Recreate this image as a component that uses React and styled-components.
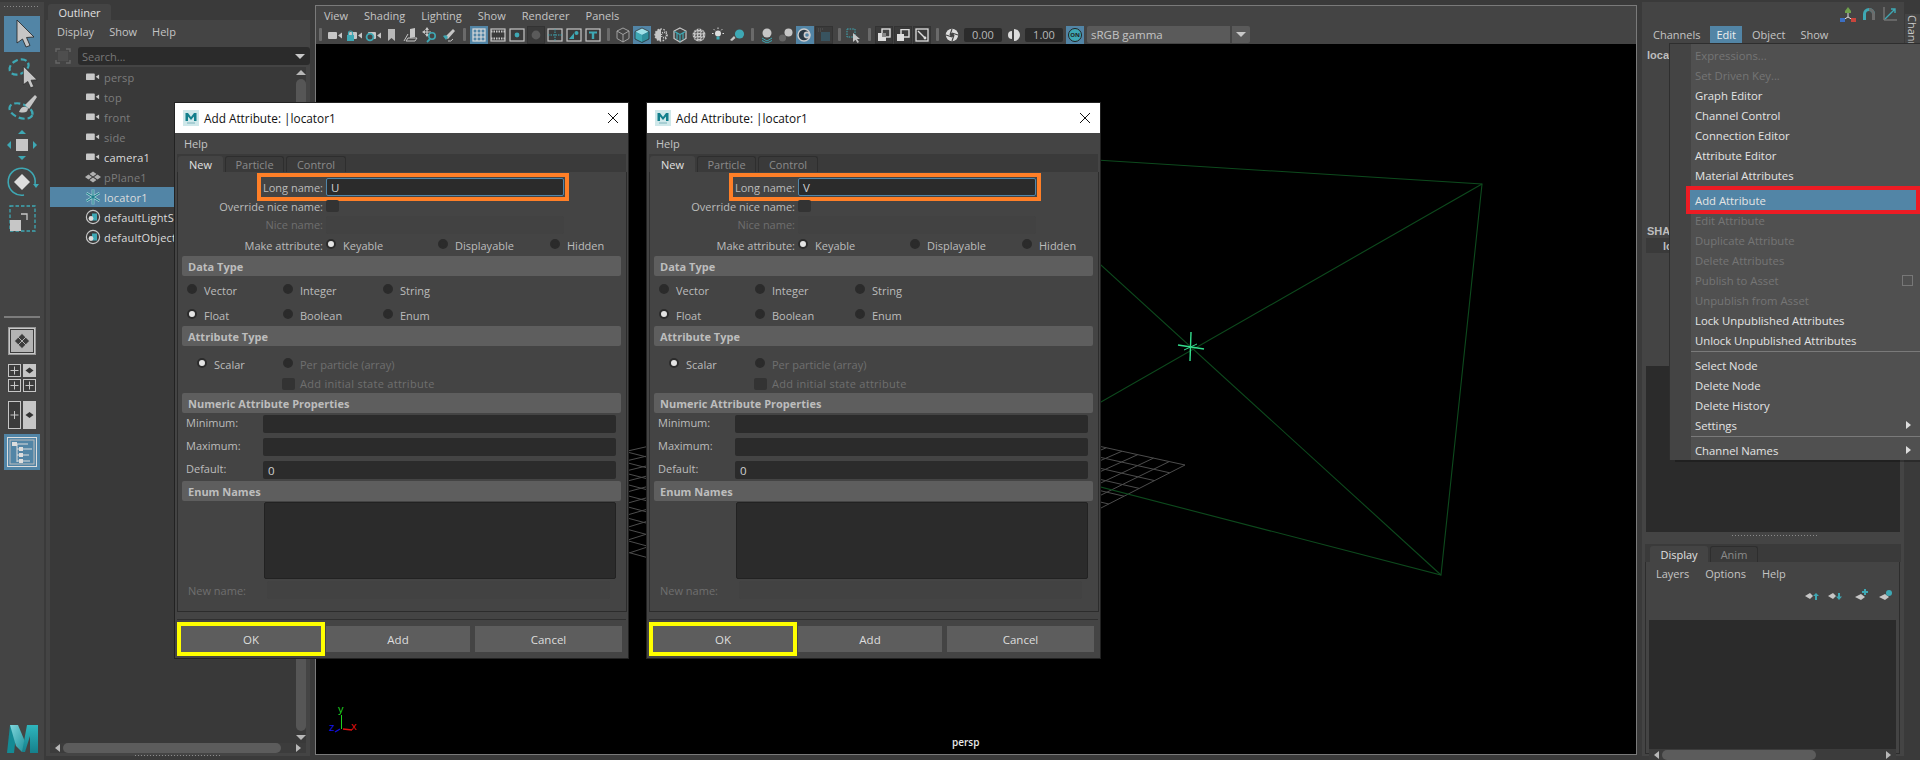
import React from 'react'
import styled, { createGlobalStyle } from 'styled-components'

const GREY = '#c6c6c6'
const TEAL = '#3ea8b4'
const BLUE = '#5285a6'

const GlobalStyle = createGlobalStyle`
	html, body {
		margin: 0;
		width: 1920px;
		height: 760px;
		overflow: hidden;
		background: #3a3a3a;
	}
	* { box-sizing: border-box; }
	body {
		font-family: 'Open Sans', 'Liberation Sans', sans-serif;
		font-size: 11px;
		color: #c8c8c8;
	}
`

const Ico = ({ size = 16, children }) => (
	<svg width={size} height={size} viewBox="0 0 16 16" style={{ display: 'block' }}>
		{children}
	</svg>
)

const Frame = ({ children }) => (
	<>
		<rect x="1" y="2" width="14" height="12" fill="#3a3a3a" stroke={GREY} strokeWidth="1.2" />
		{children}
	</>
)

/* ---- viewport toolbar glyphs ---- */
const Cam = ({ x = 1, w = 9 }) => (
	<>
		<rect x={x} y="5" width={w} height="7" rx="1" fill={GREY} />
		<polygon points={`${x + w + 1},8.5 ${x + w + 5},5.5 ${x + w + 5},11.5`} fill={GREY} />
	</>
)

const glyphs = {
	camera: <Cam />,
	camLock: (
		<>
			<Cam x={3} w={8} />
			<rect x="1" y="8" width="7" height="6" fill={TEAL} />
			<path d="M2.5 8V6a2 2 0 0 1 4 0v2" fill="none" stroke={TEAL} strokeWidth="1.2" />
		</>
	),
	camGear: (
		<>
			<Cam x={3} w={8} />
			<circle cx="5" cy="10" r="3.4" fill="#444" stroke={TEAL} strokeWidth="1.8" />
		</>
	),
	bookmark: <path d="M4 2H11V14L7.5 11L4 14Z" fill="#b8b8b8" />,
	pan: (
		<>
			<path d="M7 2L12 1L12 10L7 11Z" fill={GREY} />
			<path d="M5 11L3 14H12L14 11Z" fill="none" stroke={GREY} />
			<path d="M5 7L1 14" stroke={GREY} />
		</>
	),
	moveZoom: (
		<>
			<path d="M5 1V9M1 5H9" stroke={GREY} strokeWidth="1.2" />
			<path d="M5 0L3 3H7ZM0 5L3 3V7ZM5 10L3 7H7Z" fill={GREY} />
			<circle cx="10" cy="9" r="3.2" fill="none" stroke={TEAL} strokeWidth="1.6" />
			<path d="M8 12L5 15" stroke={TEAL} strokeWidth="1.8" />
		</>
	),
	pencil: (
		<>
			<path d="M4 10L12 2L14 4L7 12Z" fill={GREY} />
			<path d="M2 9Q5 7 7 10L5 13Z" fill={TEAL} />
			<path d="M7 14Q10 15 12 12" fill="none" stroke={GREY} />
		</>
	),
	grid: (
		<>
			<rect x="2" y="2" width="12" height="12" fill="none" stroke="#ddd" strokeWidth="1.2" />
			<path d="M6 2V14M10 2V14M2 6H14M2 10H14" stroke="#ddd" strokeWidth="1.1" />
		</>
	),
	film: (
		<Frame>
			<path d="M1 4.5H15M1 11.5H15" stroke={GREY} strokeDasharray="1.5 1" strokeWidth="2" />
		</Frame>
	),
	res: (
		<Frame>
			<circle cx="8" cy="8" r="2.4" fill={TEAL} />
		</Frame>
	),
	dark: <circle cx="8" cy="8" r="4.4" fill="#5a5a5a" />,
	field: (
		<Frame>
			<path d="M1 8H15M8 2V14" stroke={TEAL} strokeDasharray="1.5 1" />
		</Frame>
	),
	safe: (
		<Frame>
			<polygon points="3,12 8,6 8,12" fill={TEAL} />
			<circle cx="10.5" cy="6" r="2" fill={TEAL} />
		</Frame>
	),
	tee: (
		<Frame>
			<path d="M4 4.5H12V6.5H9.2V12H6.8V6.5H4Z" fill={TEAL} />
		</Frame>
	),
	wire: (
		<g fill="none" stroke="#aaa" strokeWidth="0.9">
			<path d="M8 1L14 4V11.5L8 15L2 11.5V4Z" />
			<path d="M2 4L8 7.5L14 4M8 7.5V15" />
		</g>
	),
	shaded: (
		<>
			<path d="M8 1L15 4.5L8 8L1 4.5Z" fill="#9ee0e8" />
			<path d="M1 4.5L8 8V15.5L1 12Z" fill={TEAL} />
			<path d="M15 4.5L8 8V15.5L15 12Z" fill="#2f8e9c" />
			<path d="M8 1L15 4.5V12L8 15.5L1 12V4.5Z" fill="none" stroke="#222" strokeWidth="0.7" />
		</>
	),
	half: (
		<>
			<path d="M8 2A6 6 0 0 0 8 14Z" fill={GREY} />
			<circle cx="8" cy="8" r="6" fill="none" stroke={GREY} strokeDasharray="1.5 1.5" strokeWidth="1.4" />
			<circle cx="11" cy="8" r="2.6" fill="none" stroke={GREY} strokeDasharray="1 1" strokeWidth="1.6" />
		</>
	),
	texture: (
		<g fill="none" stroke={TEAL} strokeWidth="1.2">
			<path d="M8 1L14 4V11.5L8 15L2 11.5V4Z" stroke={GREY} />
			<path d="M2.5 4.5L8 7.5L13.5 4.5M8 7.5V14.5M5 6V12.5M11 6V12.5" />
		</g>
	),
	checker: (
		<>
			<circle cx="8" cy="8" r="6.4" fill={GREY} />
			<path d="M2 5H14M1.5 8H14.5M2 11H14M5 2V14M8 1.5V14.5M11 2V14" stroke="#444" strokeWidth="1.2" strokeDasharray="1.5 1.5" />
		</>
	),
	light: (
		<>
			<circle cx="8" cy="6.5" r="3" fill="#ddd" />
			<rect x="6.5" y="9.5" width="3" height="3" fill={TEAL} />
			<path d="M8 0.5V2M2 6.5H3.5M12.5 6.5H14M3.7 2.2L4.8 3.3M12.3 2.2L11.2 3.3" stroke="#ddd" />
		</>
	),
	shadow: (
		<>
			<circle cx="10.5" cy="7" r="4.6" fill={TEAL} />
			<path d="M1 13L5 9L6.5 11L3 14Z" fill={GREY} />
		</>
	),
	ballFlat: (
		<>
			<circle cx="8" cy="6" r="4.5" fill={GREY} />
			<path d="M3 11L8 14L13 11M3 13.5L8 16L13 13.5" fill="none" stroke={TEAL} />
		</>
	),
	ballGrey: (
		<>
			<circle cx="4.5" cy="11" r="3.5" fill="#666" />
			<circle cx="10.5" cy="5.5" r="4" fill={GREY} />
		</>
	),
	xray: (
		<>
			<circle cx="7" cy="8" r="6" fill="#2b3a44" stroke="#ccc" strokeWidth="1.4" />
			<circle cx="10" cy="8" r="3.4" fill="#ccc" />
			<circle cx="10" cy="8" r="1.8" fill={BLUE} />
		</>
	),
	dimBox: (
		<>
			<rect x="5" y="5" width="9" height="9" fill="#38535f" />
			<path d="M2 2H7M2 4H5" stroke="#5a5a5a" strokeDasharray="1 1" />
		</>
	),
	selectBox: (
		<>
			<rect x="1" y="2" width="8" height="8" fill="none" stroke={TEAL} strokeDasharray="1.6 1" />
			<path d="M7 6V15L9.5 12.8L11.5 16L13 15L11 12H14Z" fill={GREY} />
		</>
	),
	overlapA: (
		<>
			<rect x="2" y="6" width="8" height="8" fill="#ddd" />
			<rect x="6" y="2" width="8" height="8" fill="#444" stroke="#ddd" strokeWidth="1.4" />
			<rect x="6" y="6" width="4" height="4" fill="#888" />
		</>
	),
	overlapB: (
		<>
			<rect x="2" y="7" width="7" height="7" fill="#ddd" />
			<path d="M6 7V2.6H14V10H9" fill="none" stroke="#ddd" strokeWidth="1.4" />
		</>
	),
	wand: (
		<>
			<rect x="2" y="2" width="12" height="12" fill="none" stroke="#ddd" strokeWidth="1.3" />
			<path d="M4 4L11 11" stroke="#ddd" strokeWidth="1.4" />
			<circle cx="11" cy="11" r="1.4" fill="#ddd" />
		</>
	),
	aperture: (
		<>
			<circle cx="8" cy="8" r="6.2" fill="#ddd" />
			<path d="M8 2L6 8M14 8L8 6M8 14L10 8M2 8L8 10" stroke="#444" strokeWidth="1.2" />
			<circle cx="8" cy="8" r="2" fill="#444" />
		</>
	),
	contrast: (
		<>
			<path d="M9 2A6 6 0 0 1 9 14Z" fill="#ddd" />
			<path d="M7 4A4 4 0 0 0 7 12Z" fill="#ddd" />
		</>
	),
}

const Glyph = ({ name }) => <Ico>{glyphs[name]}</Ico>

/* ---- left tool box ---- */
const ToolSvg = ({ children }) => (
	<svg width="36" height="36" viewBox="0 0 36 36" style={{ display: 'block' }}>
		{children}
	</svg>
)

const Arrow = ({ transform }) => (
	<path
		transform={transform}
		d="M13 4V27L18.5 23L22 31L26 29.5L22.5 21.5L30 21Z"
		fill={GREY}
		stroke="#222"
		strokeWidth="0.8"
	/>
)

const SelectTool = () => (
	<ToolSvg>
		<Arrow />
	</ToolSvg>
)
const LassoTool = () => (
	<ToolSvg>
		<ellipse cx="15" cy="14" rx="10" ry="7" transform="rotate(-25 15 14)" fill="none" stroke={TEAL} strokeWidth="2.2" strokeDasharray="6 3" />
		<Arrow transform="translate(9 10) scale(.8)" />
	</ToolSvg>
)
const PaintTool = () => (
	<ToolSvg>
		<ellipse cx="17" cy="21" rx="12" ry="7" transform="rotate(20 17 21)" fill="none" stroke={TEAL} strokeWidth="2.2" strokeDasharray="6 3" />
		<path d="M21 15L31 5L33 7L25 19Z" fill={GREY} />
		<path d="M15 22Q18 14 24 18Q24 24 15 22Z" fill={GREY} />
	</ToolSvg>
)
const MoveTool = () => (
	<ToolSvg>
		<rect x="12" y="12" width="12" height="12" fill={GREY} />
		<path d="M18 3L14 7H22ZM18 33L14 29H22ZM3 18L7 14V22ZM33 18L29 14V22Z" fill={TEAL} />
	</ToolSvg>
)
const RotateTool = () => (
	<ToolSvg>
		<path d="M31 20A13.5 13.5 0 1 0 20 31" fill="none" stroke={TEAL} strokeWidth="1.6" />
		<path d="M18 10L26 18L18 26L10 18Z" fill="#ddd" />
		<path d="M29 20H35L32 24Z" fill={TEAL} />
	</ToolSvg>
)
const ScaleTool = () => (
	<ToolSvg>
		<rect x="6" y="5" width="25" height="25" fill="none" stroke={TEAL} strokeWidth="1.3" strokeDasharray="3.5 2" />
		<rect x="6" y="19" width="11" height="11" fill={GREY} />
		<path d="M17 13H23V19" fill="none" stroke={GREY} strokeWidth="1.3" />
	</ToolSvg>
)

const Quad = ({ cx, cy, s = 1 }) => (
	<path
		transform={`translate(${cx} ${cy}) scale(${s})`}
		d="M0 -5L2.5 -2.5L0 0L-2.5 -2.5ZM-5 0L-2.5 -2.5L0 0L-2.5 2.5ZM5 0L2.5 -2.5L0 0L2.5 2.5ZM0 5L2.5 2.5L0 0L-2.5 2.5Z"
		fill="#3c3c3c"
		stroke="#c8c8c8"
		strokeWidth="0.4"
	/>
)

const Plus = ({ x, y, w, h }) => (
	<g>
		<rect x={x + 0.5} y={y + 0.5} width={w - 1} height={h - 1} fill="#3c3c3c" stroke={GREY} />
		<path d={`M${x + w / 2 - 4} ${y + h / 2}h8M${x + w / 2} ${y + h / 2 - 4}v8`} stroke={GREY} />
	</g>
)

const Filled = ({ x, y, w, h }) => (
	<g>
		<rect x={x} y={y} width={w} height={h} fill={GREY} />
		<path d={`M${x + w / 2 - 4} ${y + h / 2}l4 -3l4 3l-4 3z`} fill="#333" />
	</g>
)

const LayoutSvg = ({ children, size = 28 }) => (
	<svg width={size} height={size} viewBox={`0 0 ${size} ${size}`} style={{ display: 'block' }}>
		{children}
	</svg>
)

const MayaLogo = () => (
	<svg width="32" height="29" viewBox="0 0 32 29" style={{ display: 'block' }}>
		<defs>
			<linearGradient id="lg1" x1="0" y1="0" x2="1" y2="1">
				<stop offset="0" stopColor="#7fd6dc" />
				<stop offset="1" stopColor="#1c8f99" />
			</linearGradient>
			<linearGradient id="lg2" x1="0" y1="0" x2="0" y2="1">
				<stop offset="0" stopColor="#2fb6bd" />
				<stop offset="1" stopColor="#157f8b" />
			</linearGradient>
		</defs>
		<polygon points="1,29 4,1 11,1 8,29" fill="#148a94" />
		<polygon points="4,1 12,1 20,20 16,28 10,22" fill="url(#lg1)" />
		<polygon points="16,28 21,1 32,1 32,29 24,29 24,12 19,28" fill="url(#lg2)" />
	</svg>
)

const MiniLogo = () => (
	<LogoTile>
		<svg width="16" height="16" viewBox="0 0 16 16" style={{ display: 'block' }}>
			<path d="M2.5 11V3H5L8 7L11 3H13.5V11H11V6.5L8 10L5 6.5V11Z" fill="#137f8c" />
			<rect x="4" y="12.5" width="8" height="1" fill="#7eb4bb" />
		</svg>
	</LogoTile>
)

const CloseIcon = () => (
	<svg width="12" height="12" viewBox="0 0 12 12" style={{ display: 'block' }}>
		<path d="M1 1L11 11M11 1L1 11" stroke="#111" strokeWidth="1" />
	</svg>
)

/* ---- outliner row glyphs ---- */
const rowIcons = {
	camera: (
		<Ico size={14}>
			<rect x="0" y="4" width="10" height="7.5" rx="1" fill="#c8c8c8" />
			<polygon points="11,7.8 15,5 15,10.6" fill="#c8c8c8" />
		</Ico>
	),
	plane: (
		<Ico size={16}>
			<path d="M8 2.5L11.5 5L8 7.5L4.5 5ZM8 8.5L11.5 11L8 13.5L4.5 11ZM3.5 5.5L7 8L3.5 10.5L0 8ZM12.5 5.5L16 8L12.5 10.5L9 8Z" fill="#b0b0b0" />
		</Ico>
	),
	locator: (
		<Ico size={16}>
			<path d="M8 0.5V15.5M1.5 4L14.5 12M14.5 4L1.5 12" stroke="#b8dfe2" strokeWidth="2.6" />
			<path d="M8 0.5V15.5M1.5 4L14.5 12M14.5 4L1.5 12" stroke="#1d7d8a" strokeWidth="1.2" />
		</Ico>
	),
	set: (
		<Ico size={16}>
			<circle cx="8" cy="8" r="6.6" fill="none" stroke="#c8c8c8" strokeWidth="1.2" />
			<rect x="7" y="4.5" width="5" height="7" fill={TEAL} />
			<circle cx="6" cy="9.5" r="2.4" fill="#ddd" />
		</Ico>
	),
}

/* ---- layout ---- */
const Page = styled.div`
	position: relative;
	display: flex;
	width: 1920px;
	height: 760px;
	background: #3a3a3a;
`

const DotLine = styled.div`
	height: 1px;
	width: ${(p) => p.$width}px;
	margin: ${(p) => p.$margin || 0};
	flex: none;
	background: repeating-linear-gradient(90deg, #8a8a8a 0 1px, transparent 1px 3px);
`

const ToolBox = styled.aside`
	width: 44px;
	height: 758px;
	margin-top: 2px;
	background: #444;
	display: flex;
	flex-direction: column;
	align-items: center;
	padding-top: 4px;
`

const ToolButton = styled.div`
	width: 36px;
	height: 36px;
	margin-bottom: 1px;
	background: ${(p) => (p.$active ? BLUE : 'transparent')};
`

const ToolRule = styled.div`
	width: 36px;
	height: 2px;
	background: #7c7c7c;
	margin: 78px 0 9px;
`

const LayoutButton = styled.div`
	width: 28px;
	height: 28px;
	margin-bottom: ${(p) => p.$gap ?? 9}px;
`

const LogoSlot = styled.div`
	margin-top: auto;
	margin-bottom: 7px;
`

const OutlinerPanel = styled.section`
	width: 264px;
	height: 752px;
	margin: 4px 0 0 2px;
	display: flex;
	flex-direction: column;
`

const TabStrip = styled.div`
	height: ${(p) => p.$height || 16}px;
	width: ${(p) => (p.$width ? `${p.$width}px` : 'auto')};
	margin-left: ${(p) => p.$inset || 0}px;
	flex: none;
	display: flex;
	align-items: flex-end;
	gap: 2px;
	padding-left: ${(p) => p.$pad || 2}px;
	background: ${(p) => p.$bg || 'transparent'};
`

const PanelTab = styled.div`
	width: ${(p) => p.$width}px;
	height: ${(p) => p.$h || 16}px;
	display: flex;
	align-items: center;
	justify-content: center;
	border-radius: 3px 3px 0 0;
	background: ${(p) => (p.$active ? '#444' : '#3a3a3a')};
	border: ${(p) => (p.$active ? 'none' : '1px solid #2e2e2e')};
	border-bottom: none;
	color: ${(p) => (p.$active ? '#e0e0e0' : '#8a8a8a')};
`

const OutlinerBody = styled.div`
	flex: 1;
	min-height: 0;
	background: #444;
	padding: 0 4px;
	display: flex;
	flex-direction: column;
`

const MenuBar = styled.div`
	display: flex;
	align-items: center;
	height: ${(p) => p.$height || 22}px;
	flex: none;
	gap: ${(p) => p.$gap || 15}px;
	padding-left: ${(p) => p.$pad || 0}px;
	color: #c4c4c4;
`

const SearchRow = styled.div`
	display: flex;
	align-items: center;
	gap: 7px;
	height: 18px;
	margin-top: 5px;
	padding-left: 5px;
	flex: none;
`

const SearchBox = styled.div`
	flex: 1;
	height: 18px;
	margin-right: -4px;
	background: #2b2b2b;
	border-radius: 3px;
	display: flex;
	align-items: center;
	justify-content: space-between;
	padding: 0 5px 0 4px;
	color: #777;
`

const DownTri = styled.span`
	width: 0;
	height: 0;
	flex: none;
	border-left: 5px solid transparent;
	border-right: 5px solid transparent;
	border-top: 5px solid ${(p) => p.$color || '#c8c8c8'};
`

const SideTri = styled.span`
	width: 0;
	height: 0;
	flex: none;
	border-top: 4px solid transparent;
	border-bottom: 4px solid transparent;
	${(p) => (p.$left ? 'border-right' : 'border-left')}: 5px solid ${(p) => p.$color || '#b8b8b8'};
`

const UpTri = styled.span`
	width: 0;
	height: 0;
	flex: none;
	border-left: 5px solid transparent;
	border-right: 5px solid transparent;
	border-bottom: 5px solid #b8b8b8;
`

const ListArea = styled.div`
	flex: 1;
	min-height: 0;
	margin-top: 2px;
	display: flex;
`

const TreeList = styled.div`
	flex: 1;
	background: #393939;
`

const TreeRow = styled.div`
	height: 20px;
	display: flex;
	align-items: center;
	padding-left: 35px;
	gap: 3px;
	font-size: 11px;
	letter-spacing: 0.2px;
	background: ${(p) => (p.$selected ? BLUE : 'transparent')};
	color: ${(p) => (p.$dim ? '#7c7c7c' : '#dcdcdc')};
`

const RowIcon = styled.span`
	width: 16px;
	display: flex;
	justify-content: center;
`

const VScroll = styled.div`
	width: 10px;
	background: #393939;
	display: flex;
	flex-direction: column;
	align-items: center;
	padding: 3px 0;
	gap: 4px;
	justify-content: space-between;
`

const VThumb = styled.div`
	flex: 1;
	width: 10px;
	border-radius: 5px;
	background: #565656;
`

const HScroll = styled.div`
	height: ${(p) => p.$h || 10}px;
	flex: none;
	background: #3c3c3c;
	display: flex;
	align-items: center;
	gap: 3px;
	padding: 0 5px;
`

const HThumb = styled.div`
	width: ${(p) => p.$width}px;
	height: ${(p) => p.$h || 10}px;
	border-radius: 5px;
	background: #5c5c5c;
`

const HEnd = styled.div`
	margin-left: auto;
	display: flex;
`

const ViewportPane = styled.main`
	width: 1322px;
	height: 750px;
	margin: 5px 0 0 5px;
	border: 1px solid #7a7a7a;
	background: #444;
	display: flex;
	flex-direction: column;
`

const ViewToolbar = styled.div`
	display: flex;
	align-items: center;
	height: 19px;
	flex: none;
	margin-left: -1px;
`

const Handle = styled.div`
	width: 11px;
	height: 17px;
	flex: none;
	&::before {
		content: '';
		display: block;
		margin: 2px auto;
		width: 3px;
		height: 13px;
		background: #6a6a6a;
		border-radius: 1px;
	}
`

const Slot = styled.div`
	width: 18px;
	height: 18px;
	margin-right: 1px;
	flex: none;
	display: flex;
	align-items: center;
	justify-content: center;
	background: ${(p) => (p.$active ? BLUE : p.$dark ? '#3a3a3a' : 'transparent')};
	box-shadow: ${(p) => (p.$dark ? 'inset 0 0 0 1px #333' : 'none')};
`

const NumberField = styled.div`
	width: 38px;
	height: 14px;
	margin: 0 2px;
	flex: none;
	background: #2b2b2b;
	border-radius: 2px;
	display: flex;
	align-items: center;
	justify-content: center;
	color: #b8b8b8;
`

const OnBadge = styled.div`
	width: 18px;
	height: 18px;
	margin: 0 3px 0 1px;
	flex: none;
	background: ${BLUE};
	display: flex;
	align-items: center;
	justify-content: center;
	span {
		width: 14px;
		height: 14px;
		border-radius: 50%;
		background: ${TEAL};
		border: 1px solid #222;
		font-size: 6px;
		line-height: 12px;
		text-align: center;
		color: #222;
		font-weight: 700;
	}
`

const GammaBox = styled.div`
	width: 163px;
	height: 17px;
	flex: none;
	display: flex;
	background: #5a5a5a;
	border-radius: 2px;
	color: #c4c4c4;
	align-items: center;
	padding-left: 4px;
	font-size: 11.5px;
`

const GammaArrow = styled.div`
	margin-left: auto;
	width: 20px;
	height: 17px;
	display: flex;
	align-items: center;
	justify-content: center;
	border-left: 2px solid #444;
`

const Stage = styled.div`
	flex: 1;
	position: relative;
	background: #000;
	overflow: hidden;
`

const SceneSvg = styled.svg`
	position: absolute;
	inset: 0;
	width: 100%;
	height: 100%;
`

const HudLabel = styled.span`
	position: absolute;
	left: 636px;
	bottom: 5px;
	font-size: 10px;
	font-weight: 600;
	color: #e8e8e8;
`

/* ---- channel box ---- */
const ChannelPane = styled.aside`
	width: 262px;
	height: 754px;
	margin: 2px 0 0 5px;
	background: #444;
	display: flex;
	flex-direction: column;
`

const TopIcons = styled.div`
	height: 24px;
	flex: none;
	display: flex;
	align-items: center;
	justify-content: flex-end;
	gap: 5px;
	padding-right: 6px;
`

const MenuWord = styled.span`
	height: 17px;
	display: flex;
	align-items: center;
	padding: 0 ${(p) => (p.$active ? 6 : 0)}px;
	margin-left: ${(p) => p.$ml || 0}px;
	background: ${(p) => (p.$active ? BLUE : 'transparent')};
	color: ${(p) => (p.$active ? '#eee' : 'inherit')};
`

const NodeName = styled.div`
	height: ${(p) => p.$h}px;
	flex: none;
	padding: 0 0 ${(p) => p.$bottom || 0}px 5px;
	display: flex;
	align-items: ${(p) => p.$align || 'center'};
	font-weight: 700;
	font-family: 'Liberation Sans', sans-serif;
	color: #bdbdbd;
`

const ShapeRow = styled.div`
	height: 15px;
	margin-left: 4px;
	width: 254px;
	flex: none;
	background: #3a3a3a;
	padding-left: 17px;
	display: flex;
	align-items: center;
	font-weight: 700;
	font-family: 'Liberation Sans', sans-serif;
	color: #bdbdbd;
`

const ChannelGap = styled.div`
	height: 113px;
	flex: none;
`

const DarkBox = styled.div`
	height: ${(p) => p.$h}px;
	flex: none;
	margin: ${(p) => p.$margin};
	background: #2b2b2b;
`

const LayerPanel = styled.div`
	flex: none;
	margin-left: 3px;
	width: 255px;
	height: 192px;
	background: #444;
	border: 1px solid #2d2d2d;
	border-top: none;
	padding: 0 3px;
	display: flex;
	flex-direction: column;
`

const LayerIcons = styled.div`
	height: 36px;
	flex: none;
	display: flex;
	align-items: center;
	padding: 0 0 12px 155px;
`

const LayerIcon = styled.div`
	width: ${(p) => p.$w}px;
`

const StripTab = styled.div`
	width: 15px;
	margin: 14px 0 0 1px;
	height: 60px;
	writing-mode: vertical-rl;
	white-space: nowrap;
	overflow: hidden;
	color: #c8c8c8;
	line-height: 15px;
	background: #444;
	padding-top: 1px;
`

/* ---- popup menu ---- */
const PopupMenu = styled.div`
	position: absolute;
	left: 1669px;
	top: 43px;
	width: 251px;
	z-index: 6;
	background: linear-gradient(90deg, #444 0 21px, #505050 21px);
	border: 1px solid #2e2e2e;
	border-width: 1px 0 0 1px;
	padding-top: 1px;
	box-shadow: 6px 2px 0 rgba(0, 0, 0, 0.25);
`

const MenuItem = styled.div`
	height: 20px;
	display: flex;
	align-items: center;
	margin-left: 20px;
	padding-left: 5px;
	margin-right: ${(p) => (p.$hot ? 4 : 0)}px;
	color: ${(p) => (p.$off ? '#757575' : '#e4e4e4')};
	background: ${(p) => (p.$hot ? BLUE : 'transparent')};
	box-shadow: ${(p) => (p.$hot ? '0 0 0 4px #ed1c24' : 'none')};
	font-size: 11.3px;
`

const ItemEnd = styled.span`
	margin-left: auto;
	margin-right: 9px;
	display: flex;
`

const MenuCheck = styled.span`
	width: 11px;
	height: 11px;
	border: 1px solid #777;
	margin-right: -2px;
`

const MenuSep = styled.div`
	height: 1px;
	margin: 1px 0 3px 21px;
	background: #7a7a7a;
`

/* ---- dialog ---- */
const DialogWin = styled.div`
	position: absolute;
	left: ${(p) => p.$left}px;
	top: 103px;
	width: 453px;
	height: 555px;
	z-index: 5;
	background: #444;
	box-shadow: 0 0 0 1px #222;
	display: flex;
	flex-direction: column;
`

const TitleBar = styled.div`
	height: 30px;
	flex: none;
	background: #fff;
	color: #111;
	display: flex;
	align-items: center;
	padding: 0 9px 0 8px;
	gap: 5px;
	font-size: 11.8px;
`

const LogoTile = styled.span`
	width: 16px;
	height: 16px;
	background: #cfe8ea;
	flex: none;
`

const TitleClose = styled.span`
	margin-left: auto;
`

const DialogTabs = styled.div`
	height: 18px;
	flex: none;
	margin: 0 2px 0 2px;
	background: #3a3a3a;
	display: flex;
	align-items: flex-end;
	gap: 2px;
	padding-left: 1px;
`

const TabPage = styled.div`
	height: 440px;
	flex: none;
	margin: 0 1px 0 2px;
	padding-top: 6px;
	border: 1px solid #2c2c2c;
	border-top: none;
	display: flex;
	flex-direction: column;
`

const Row = styled.div`
	height: ${(p) => p.$h}px;
	flex: none;
	display: flex;
	align-items: ${(p) => p.$align || 'center'};
	padding-left: ${(p) => p.$pad || 0}px;
	padding-top: ${(p) => p.$top || 0}px;
`

const FieldLabel = styled.span`
	width: ${(p) => p.$width || 145}px;
	flex: none;
	text-align: ${(p) => p.$side || 'right'};
	margin-right: ${(p) => p.$gap ?? 3}px;
	letter-spacing: ${(p) => p.$spread || 0}px;
	color: ${(p) => (p.$off ? '#6f6f6f' : '#bcbcbc')};
`

const TextField = styled.div`
	width: ${(p) => p.$width}px;
	height: 18px;
	flex: none;
	border-radius: 2px;
	background: ${(p) => (p.$off ? '#424242' : '#2b2b2b')};
	border: ${(p) => (p.$focus ? '1px solid #4f86ab' : 'none')};
	padding-left: ${(p) => (p.$focus ? 4 : 5)}px;
	color: #d0d0d0;
	display: flex;
	align-items: center;
	font-size: 11.5px;
`

const FocusRow = styled.div`
	height: 20px;
	width: 304px;
	margin: -1px 0 0 83px;
	display: flex;
	align-items: center;
	box-shadow: 0 0 0 4px #ff7f27;
`

const CheckBox = styled.span`
	width: 13px;
	height: 12px;
	flex: none;
	border-radius: 2px;
	background: #333;
	margin-right: ${(p) => p.$gap || 0}px;
`

const RadioOpt = styled.span`
	display: flex;
	align-items: center;
	width: ${(p) => (p.$width ? `${p.$width}px` : 'auto')};
	flex: none;
	gap: 7px;
	color: ${(p) => (p.$off ? '#6f6f6f' : '#bcbcbc')};
`

const RadioDot = styled.span`
	width: 10px;
	height: 10px;
	flex: none;
	border-radius: 50%;
	border: 2px solid #2b2b2b;
	background: ${(p) => (p.$on ? '#e4e4e4' : '#2b2b2b')};
	margin-top: -2px;
`

const SectionHead = styled.div`
	height: 20px;
	flex: none;
	width: 439px;
	margin-left: 4px;
	padding-left: 6px;
	border-radius: 2px;
	background: #5e5e5e;
	font-weight: 700;
	color: #bdbdbd;
	display: flex;
	align-items: center;
`

const EnumBox = styled.div`
	width: 352px;
	height: 77px;
	flex: none;
	margin: 1px 0 0 86px;
	background: #2b2b2b;
	border: 1px solid #222;
	border-radius: 2px;
`

const ButtonBar = styled.div`
	flex: 1;
	margin: 7px 2px 0 2px;
	border-top: 1px solid #2f2f2f;
	padding: 6px 0 0 4px;
	display: flex;
	gap: 5px;
`

const DlgButton = styled.div`
	width: ${(p) => p.$width}px;
	height: 26px;
	background: #5d5d5d;
	color: #dedede;
	display: flex;
	align-items: center;
	justify-content: center;
	font-size: 11.5px;
	box-shadow: ${(p) => (p.$mark ? '0 0 0 4px #ffff00' : 'none')};
`

const Dialog = ({ left, value }) => (
	<DialogWin $left={left}>
		<TitleBar>
			<MiniLogo />
			<span>Add Attribute: |locator1</span>
			<TitleClose>
				<CloseIcon />
			</TitleClose>
		</TitleBar>
		<MenuBar $height={21} $pad={9}>
			<span>Help</span>
		</MenuBar>
		<DialogTabs>
			<PanelTab $active $width={45}>New</PanelTab>
			<PanelTab $width={59}>Particle</PanelTab>
			<PanelTab $width={60}>Control</PanelTab>
		</DialogTabs>
		<TabPage>
			<Row $h={19}>
				<FocusRow>
					<FieldLabel $width={62}>Long name:</FieldLabel>
					<TextField $width={238} $focus>{value}</TextField>
				</FocusRow>
			</Row>
			<Row $h={18}>
				<FieldLabel>Override nice name:</FieldLabel>
				<CheckBox />
			</Row>
			<Row $h={19}>
				<FieldLabel $off>Nice name:</FieldLabel>
				<TextField $width={238} $off />
			</Row>
			<Row $h={22}>
				<FieldLabel>Make attribute:</FieldLabel>
				<RadioOpt $width={112}><RadioDot $on />Keyable</RadioOpt>
				<RadioOpt $width={112}><RadioDot />Displayable</RadioOpt>
				<RadioOpt><RadioDot />Hidden</RadioOpt>
			</Row>
			<SectionHead>Data Type</SectionHead>
			<Row $h={28} $pad={9}>
				<RadioOpt $width={96}><RadioDot />Vector</RadioOpt>
				<RadioOpt $width={100}><RadioDot />Integer</RadioOpt>
				<RadioOpt><RadioDot />String</RadioOpt>
			</Row>
			<Row $h={22} $pad={9}>
				<RadioOpt $width={96}><RadioDot $on />Float</RadioOpt>
				<RadioOpt $width={100}><RadioDot />Boolean</RadioOpt>
				<RadioOpt><RadioDot />Enum</RadioOpt>
			</Row>
			<SectionHead>Attribute Type</SectionHead>
			<Row $h={28} $pad={19} $top={8}>
				<RadioOpt $width={86}><RadioDot $on />Scalar</RadioOpt>
				<RadioOpt $off><RadioDot />Per particle (array)</RadioOpt>
			</Row>
			<Row $h={19} $pad={104}>
				<CheckBox $gap={5} />
				<FieldLabel $off $width={200} $side="left" $spread={0.28}>Add initial state attribute</FieldLabel>
			</Row>
			<SectionHead>Numeric Attribute Properties</SectionHead>
			<Row $h={23} $pad={8} $top={2} $align="flex-start">
				<FieldLabel $width={77} $side="left" $gap={0}>Minimum:</FieldLabel>
				<TextField $width={353} />
			</Row>
			<Row $h={23} $pad={8} $top={2} $align="flex-start">
				<FieldLabel $width={77} $side="left" $gap={0}>Maximum:</FieldLabel>
				<TextField $width={353} />
			</Row>
			<Row $h={22} $pad={8} $top={2} $align="flex-start">
				<FieldLabel $width={77} $side="left" $gap={0}>Default:</FieldLabel>
				<TextField $width={353}>0</TextField>
			</Row>
			<SectionHead>Enum Names</SectionHead>
			<EnumBox />
			<Row $h={21} $pad={10} $top={1}>
				<FieldLabel $off $width={79} $side="left" $gap={0}>New name:</FieldLabel>
				<TextField $width={343} $off />
			</Row>
		</TabPage>
		<ButtonBar>
			<DlgButton $mark $width={140}>OK</DlgButton>
			<DlgButton $width={144}>Add</DlgButton>
			<DlgButton $width={147}>Cancel</DlgButton>
		</ButtonBar>
	</DialogWin>
)

/* ---- scene ---- */
const GridLines = () => {
	// plane seen in perspective, corners read off the picture
	const R = [1185, 465]
	const B = [870, 396]
	const L = [425, 497]
	const F = [880, 621]
	const n = 20
	const mix = (a, b, t) => [a[0] + (b[0] - a[0]) * t, a[1] + (b[1] - a[1]) * t]
	const lines = []
	for (let i = 0; i <= n; i++) {
		const t = i / n
		const a = mix(R, B, t)
		const b = mix(F, L, t)
		const c = mix(R, F, t)
		const d = mix(B, L, t)
		lines.push(`M${a[0]} ${a[1]}L${b[0]} ${b[1]}M${c[0]} ${c[1]}L${d[0]} ${d[1]}`)
	}
	return <path d={lines.join('')} fill="none" stroke="#4c4c4c" strokeWidth="1" />
}

const Scene = () => (
	<SceneSvg viewBox="316 44 1320 710" preserveAspectRatio="none">
		<GridLines />
		<g fill="none" stroke="#0d4a1d" strokeWidth="1.1">
			<path d="M1000 154L1482 184L1441 575L1000 461" />
			<path d="M1482 184L900 517" />
			<path d="M1441 575L1000 173" />
		</g>
		<g stroke="#33dd8c" strokeWidth="1.4">
			<path d="M1191 332L1190 361" />
			<path d="M1178 345L1204 349" />
			<path d="M1184 350L1197 344" strokeWidth="1" />
		</g>
		<path d="M341.5 715V729" stroke="#1fd01f" />
		<path d="M343 729L352 730" stroke="#e01010" strokeWidth="1.4" />
		<path d="M340 729L335 732" stroke="#1010e0" strokeWidth="1.4" />
		<text x="338" y="713" fill="#1fd01f" fontSize="11" fontFamily="Liberation Sans">y</text>
		<text x="329" y="731" fill="#1414e6" fontSize="11" fontFamily="Liberation Sans">z</text>
		<text x="351" y="730" fill="#e01010" fontSize="11" fontFamily="Liberation Sans">x</text>
	</SceneSvg>
)

const toolSlots = [
	['h'], ['camera'], ['camLock'], ['camGear'], ['bookmark'], ['pan'], ['moveZoom'], ['pencil'],
	['h'], ['grid', 'active'], ['film'], ['res'], ['dark', 'dark'], ['field'], ['safe'], ['tee'],
	['h'], ['wire'], ['shaded', 'active'], ['half'], ['texture'], ['checker'], ['light'], ['shadow'],
	['h'], ['ballFlat'], ['ballGrey'], ['xray', 'active'], ['dimBox', 'dark'],
	['h'], ['selectBox'],
	['h'], ['overlapA', 'dark'], ['overlapB', 'dark'], ['wand', 'dark'],
	['h'],
]

const outlinerRows = [
	['camera', 'persp', true],
	['camera', 'top', true],
	['camera', 'front', true],
	['camera', 'side', true],
	['camera', 'camera1'],
	['plane', 'pPlane1', true],
	['locator', 'locator1', false, true],
	['set', 'defaultLightSet'],
	['set', 'defaultObjectSet'],
]

const menuRows = [
	{ t: 'Expressions...', off: true },
	{ t: 'Set Driven Key...', off: true },
	{ t: 'Graph Editor' },
	{ t: 'Channel Control' },
	{ t: 'Connection Editor' },
	{ t: 'Attribute Editor' },
	{ t: 'Material Attributes' },
	{ sep: true },
	{ t: 'Add Attribute', hot: true },
	{ t: 'Edit Attribute', off: true },
	{ t: 'Duplicate Attribute', off: true },
	{ t: 'Delete Attributes', off: true },
	{ t: 'Publish to Asset', off: true, check: true },
	{ t: 'Unpublish from Asset', off: true },
	{ t: 'Lock Unpublished Attributes' },
	{ t: 'Unlock Unpublished Attributes' },
	{ sep: true },
	{ t: 'Select Node' },
	{ t: 'Delete Node' },
	{ t: 'Delete History' },
	{ t: 'Settings', sub: true },
	{ sep: true },
	{ t: 'Channel Names', sub: true },
]

const App = () => (
	<Page>
		<GlobalStyle />
		<ToolBox>
			<DotLine $width={36} $margin="0 0 9px" />
			<ToolButton $active><SelectTool /></ToolButton>
			<ToolButton><LassoTool /></ToolButton>
			<ToolButton><PaintTool /></ToolButton>
			<ToolButton><MoveTool /></ToolButton>
			<ToolButton><RotateTool /></ToolButton>
			<ToolButton><ScaleTool /></ToolButton>
			<ToolRule />
			<LayoutButton>
				<LayoutSvg>
					<rect x="0.5" y="0.5" width="27" height="27" fill="#c8c8c8" stroke="#999" />
					<rect x="2.5" y="2.5" width="23" height="23" fill="#b4b4b4" stroke="#3c3c3c" />
					<Quad cx={14} cy={14} s={1.5} />
				</LayoutSvg>
			</LayoutButton>
			<LayoutButton>
				<LayoutSvg>
					<Plus x={0} y={0} w={13} h={13} />
					<Filled x={15} y={0} w={13} h={13} />
					<Plus x={0} y={15} w={13} h={13} />
					<Plus x={15} y={15} w={13} h={13} />
				</LayoutSvg>
			</LayoutButton>
			<LayoutButton $gap={5}>
				<LayoutSvg>
					<Plus x={0} y={0} w={13} h={28} />
					<Filled x={15} y={0} w={13} h={28} />
				</LayoutSvg>
			</LayoutButton>
			<ToolButton $active>
				<ToolSvg>
					<rect x="3.5" y="3.5" width="29" height="29" fill="none" stroke="#ddd" />
					<rect x="6" y="6" width="24" height="24" fill="none" stroke="#bbb" />
					<path d="M10 10H24M13 10V28M13 15H28M13 21H25M13 27H26" stroke="#ddd" />
					<rect x="8" y="8" width="5" height="4" fill="#ddd" />
					<rect x="15" y="13" width="4" height="4" fill="#ddd" />
					<rect x="15" y="19" width="4" height="4" fill="#ddd" />
					<rect x="15" y="25" width="4" height="4" fill="#ddd" />
				</ToolSvg>
			</ToolButton>
			<LogoSlot><MayaLogo /></LogoSlot>
		</ToolBox>

		<OutlinerPanel>
			<TabStrip>
				<PanelTab $active $width={63}>Outliner</PanelTab>
			</TabStrip>
			<OutlinerBody>
				<MenuBar $pad={7}>
					<span>Display</span>
					<span>Show</span>
					<span>Help</span>
				</MenuBar>
				<SearchRow>
					<Ico>
						<path d="M1 4V1H5M11 1H15V4M15 12V15H11M5 15H1V12" fill="none" stroke="#666" strokeWidth="1.4" />
						<rect x="3" y="3" width="10" height="10" fill="#4e4e4e" />
					</Ico>
					<SearchBox>
						<span>Search...</span>
						<DownTri />
					</SearchBox>
				</SearchRow>
				<ListArea>
					<TreeList>
						{outlinerRows.map(([icon, name, dim, selected]) => (
							<TreeRow key={name} $dim={dim} $selected={selected}>
								<RowIcon>{rowIcons[icon]}</RowIcon>
								{name}
							</TreeRow>
						))}
					</TreeList>
					<VScroll>
						<UpTri />
						<VThumb />
						<DownTri $color="#b8b8b8" />
					</VScroll>
				</ListArea>
				<HScroll>
					<SideTri $left />
					<HThumb $width={218} />
					<HEnd><SideTri /></HEnd>
				</HScroll>
				<DotLine $width={85} $margin="2px 0 0 85px" />
			</OutlinerBody>
		</OutlinerPanel>

		<ViewportPane>
			<MenuBar $height={19} $pad={8} $gap={16}>
				<span>View</span>
				<span>Shading</span>
				<span>Lighting</span>
				<span>Show</span>
				<span>Renderer</span>
				<span>Panels</span>
			</MenuBar>
			<ViewToolbar>
				{toolSlots.map(([name, kind], i) =>
					name === 'h' ? (
						<Handle key={i} />
					) : (
						<Slot key={i} $active={kind === 'active'} $dark={kind === 'dark'}>
							<Glyph name={name} />
						</Slot>
					)
				)}
				<Slot><Glyph name="aperture" /></Slot>
				<NumberField>0.00</NumberField>
				<Slot><Glyph name="contrast" /></Slot>
				<NumberField>1.00</NumberField>
				<OnBadge><span>ON</span></OnBadge>
				<GammaBox>
					sRGB gamma
					<GammaArrow><DownTri /></GammaArrow>
				</GammaBox>
			</ViewToolbar>
			<Stage>
				<Scene />
				<HudLabel>persp</HudLabel>
			</Stage>
		</ViewportPane>

		<ChannelPane>
			<TopIcons>
				<Ico>
					<path d="M8 7V11M8 11L3 14M8 11L13 14" stroke="#ddd" />
					<path d="M5 5L8 1L11 5V7H5Z" fill="#6fa04c" />
					<rect x="0" y="12" width="5" height="4" fill="#3c6fc4" />
					<rect x="11" y="12" width="5" height="4" fill="#c8453c" />
				</Ico>
				<Ico>
					<path d="M2 14V8A6 6 0 0 1 14 8V14H11V8A3 3 0 0 0 5 8V14Z" fill={TEAL} />
					<path d="M8 2A6 6 0 0 1 14 8V14H11V8A3 3 0 0 0 8 5Z" fill="#6c6c6c" />
				</Ico>
				<Ico>
					<path d="M2 1V14H15" fill="none" stroke="#888" />
					<path d="M3 13L13 3M9 3H13V7" fill="none" stroke={TEAL} strokeWidth="1.4" />
				</Ico>
			</TopIcons>
			<MenuBar $height={17} $pad={11} $gap={10}>
				<span>Channels</span>
				<MenuWord $active>Edit</MenuWord>
				<span>Object</span>
				<MenuWord $ml={5}>Show</MenuWord>
			</MenuBar>
			<NodeName $h={24}>locator1</NodeName>
			<NodeName $h={171} $align="flex-end" $bottom={1}>SHAPES</NodeName>
			<ShapeRow>locatorShape1</ShapeRow>
			<ChannelGap />
			<DarkBox $h={166} $margin="0 4px 0 4px" />
			<DotLine $width={85} $margin="3px 0 8px 90px" />
			<TabStrip $height={18} $bg="#3a3a3a" $pad={5} $inset={3} $width={256}>
				<PanelTab $active $width={58} $h={16}>Display</PanelTab>
				<PanelTab $width={48} $h={16}>Anim</PanelTab>
			</TabStrip>
			<LayerPanel>
				<MenuBar $pad={7} $gap={16}>
					<span>Layers</span>
					<span>Options</span>
					<span>Help</span>
				</MenuBar>
				<LayerIcons>
					<LayerIcon $w={23}>
						<Ico>
							<path d="M1 8L6 5L9 8L6 11Z" fill={GREY} />
							<path d="M12 5L15 8H13V12H11V8H9Z" fill={TEAL} />
						</Ico>
					</LayerIcon>
					<LayerIcon $w={27}>
						<Ico>
							<path d="M1 8L6 5L9 8L6 11Z" fill={GREY} />
							<path d="M12 12L15 8.5H13V5H11V8.5H9Z" fill={TEAL} />
						</Ico>
					</LayerIcon>
					<LayerIcon $w={24}>
						<Ico>
							<path d="M1 9L7 6L11 9L7 12Z" fill={GREY} />
							<path d="M11 1V7M8 4H14" stroke={TEAL} strokeWidth="2" />
						</Ico>
					</LayerIcon>
					<LayerIcon $w={16}>
						<Ico>
							<path d="M1 9L7 6L11 9L7 12Z" fill={GREY} />
							<circle cx="11" cy="5" r="3" fill={TEAL} />
						</Ico>
					</LayerIcon>
				</LayerIcons>
				<DarkBox $h={129} $margin="0" />
				<HScroll $h={12}>
					<SideTri $left />
					<HThumb $width={154} $h={10} />
					<HEnd><SideTri /></HEnd>
				</HScroll>
			</LayerPanel>
		</ChannelPane>

		<StripTab>Channel Box</StripTab>

		<Dialog left={175} value="U" />
		<Dialog left={647} value="V" />

		<PopupMenu>
			{menuRows.map((row, i) =>
				row.sep ? (
					<MenuSep key={i} />
				) : (
					<MenuItem key={i} $off={row.off} $hot={row.hot}>
						{row.t}
						{row.check && <ItemEnd><MenuCheck /></ItemEnd>}
						{row.sub && <ItemEnd><SideTri $color="#ddd" /></ItemEnd>}
					</MenuItem>
				)
			)}
		</PopupMenu>
	</Page>
)

export default App
